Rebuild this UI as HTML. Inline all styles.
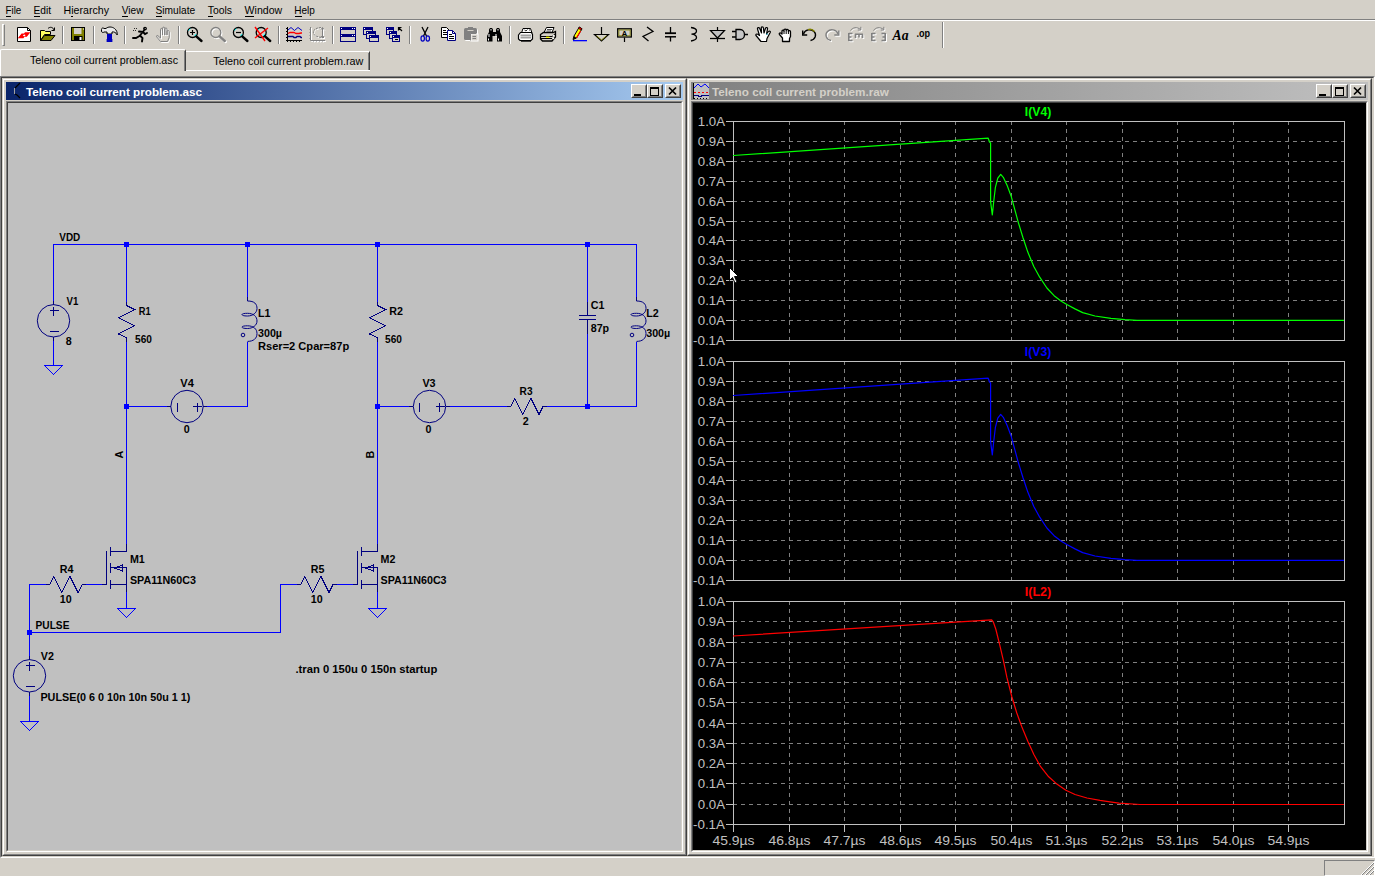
<!DOCTYPE html>
<html lang="en"><head><meta charset="utf-8"><title>LTspice IV - Teleno coil current problem</title>
<style>
html,body{margin:0;padding:0}
body{width:1375px;height:876px;background:#D4D0C8;position:relative;overflow:hidden;font-family:"Liberation Sans",sans-serif;font-size:11px;color:#000}
.abs{position:absolute}
svg{position:absolute;left:0;top:0;overflow:visible}
svg text{font-family:"Liberation Sans",sans-serif;white-space:pre}
.hl{position:absolute;height:1px}
.vl{position:absolute;width:1px}
.win{position:absolute;box-sizing:border-box;background:#D4D0C8;border:1px solid;border-color:#D4D0C8 #404040 #404040 #D4D0C8}
.win>.in{position:absolute;left:0;top:0;right:0;bottom:0;border:1px solid;border-color:#fff #808080 #808080 #fff}
.title{position:absolute;left:3px;top:3px;right:3px;height:18px}
.client{position:absolute;left:3px;top:22px;right:3px;bottom:3px;box-sizing:border-box;border:1px solid;border-color:#808080 #fff #fff #808080}
.client>.c2{position:absolute;left:0;top:0;right:0;bottom:0;border:1px solid;border-color:#404040 #D4D0C8 #D4D0C8 #404040}
.btn{position:absolute;top:2px;width:16px;height:14px;box-sizing:border-box;background:#D4D0C8;border:1px solid;border-color:#fff #404040 #404040 #fff}
.btn>i{position:absolute;left:0;top:0;right:0;bottom:0;border:1px solid;border-color:#D4D0C8 #808080 #808080 #D4D0C8}
</style></head>
<body>

<div class="hl" style="left:0;top:19px;width:1375px;background:#808080"></div>
<div class="hl" style="left:0;top:20px;width:1375px;background:#fff"></div>
<div class="abs" style="left:2px;top:24px;width:3px;height:22px;box-sizing:border-box;border:1px solid;border-color:#fff #808080 #808080 #fff"></div>
<div class="abs" style="left:0;top:49px;width:186px;height:22px;box-sizing:border-box;border-top:1px solid #fff;border-left:1px solid #fff;border-right:1px solid #404040;border-radius:2px 2px 0 0"><div class="abs" style="right:0;top:1px;bottom:0;width:1px;background:#808080"></div></div>
<div class="abs" style="left:186px;top:51px;width:184px;height:19px;box-sizing:border-box;border-top:1px solid #fff;border-right:1px solid #404040"><div class="abs" style="right:0;top:1px;bottom:0;width:1px;background:#808080"></div></div>
<div class="hl" style="left:186px;top:70px;width:184px;background:#fff"></div>
<div class="vl" style="left:0;top:50px;height:26px;background:#fff"></div>
<div class="abs" style="left:0;top:76px;width:1375px;height:782px;box-sizing:border-box;border:1px solid;border-color:#808080 #fff #fff #808080"><div class="abs" style="left:0;top:0;right:0;bottom:0;border:1px solid;border-color:#404040 #D4D0C8 #D4D0C8 #404040"></div></div>
<div class="win" style="left:2px;top:78px;width:685px;height:778px"><div class="in"></div><div class="title" style="background:linear-gradient(to right,#0A246A,#A6CAF0)"><div class="btn" style="left:625px"><i></i></div><div class="btn" style="left:641px"><i></i></div><div class="btn" style="left:659px"><i></i></div></div>
<div class="client" style="background:#C0C0C0"><div class="c2"></div></div></div>
<div class="win" style="left:687px;top:78px;width:685px;height:778px"><div class="in"></div><div class="title" style="background:linear-gradient(to right,#808080,#C0C0C0)"><div class="btn" style="left:625px"><i></i></div><div class="btn" style="left:641px"><i></i></div><div class="btn" style="left:659px"><i></i></div></div>
<div class="client" style="background:#000"><div class="c2"></div></div></div>
<div class="abs" style="left:1324px;top:860px;width:51px;height:16px;box-sizing:border-box;border:1px solid;border-color:#808080 #fff #fff #808080"></div>
<svg width="1375" height="876" viewBox="0 0 1375 876">
<g font-size="11.5">
<text x="5.5" y="14.3" textLength="15.8" lengthAdjust="spacingAndGlyphs">File</text>
<text x="33.4" y="14.3" textLength="17.6" lengthAdjust="spacingAndGlyphs">Edit</text>
<text x="63.5" y="14.3" textLength="45.5" lengthAdjust="spacingAndGlyphs">Hierarchy</text>
<text x="121.7" y="14.3" textLength="21.8" lengthAdjust="spacingAndGlyphs">View</text>
<text x="155.5" y="14.3" textLength="39.7" lengthAdjust="spacingAndGlyphs">Simulate</text>
<text x="207.7" y="14.3" textLength="24.3" lengthAdjust="spacingAndGlyphs">Tools</text>
<text x="244.6" y="14.3" textLength="37.6" lengthAdjust="spacingAndGlyphs">Window</text>
<text x="294.3" y="14.3" textLength="20.6" lengthAdjust="spacingAndGlyphs">Help</text>
</g>
<rect x="6" y="16" width="5" height="1" fill="#000"/>
<rect x="34" y="16" width="6" height="1" fill="#000"/>
<rect x="71" y="16" width="2" height="1" fill="#000"/>
<rect x="122" y="16" width="6" height="1" fill="#000"/>
<rect x="156" y="16" width="6" height="1" fill="#000"/>
<rect x="208" y="16" width="5" height="1" fill="#000"/>
<rect x="245" y="16" width="9" height="1" fill="#000"/>
<rect x="295" y="16" width="7" height="1" fill="#000"/>
<text x="30" y="64" font-size="11.5" textLength="148" lengthAdjust="spacingAndGlyphs">Teleno coil current problem.asc</text>
<text x="213.3" y="65" font-size="11.5" textLength="150" lengthAdjust="spacingAndGlyphs">Teleno coil current problem.raw</text>
<text x="26" y="96" font-size="11.5" font-weight="bold" fill="#fff" textLength="176" lengthAdjust="spacingAndGlyphs">Teleno coil current problem.asc</text>
<text x="712" y="96" font-size="11.5" font-weight="bold" fill="#D4D0C8" textLength="177" lengthAdjust="spacingAndGlyphs">Teleno coil current problem.raw</text>
<g fill="none" stroke="#000" stroke-width="1.2"><path d="M20,83 L15,88 M15,94 L17,95 L20,98"/></g><rect x="14" y="88" width="1" height="6" fill="#A0A0A0"/>
<g shape-rendering="crispEdges"><rect x="694" y="83" width="15" height="16" fill="#C0C0C0"/><rect x="693" y="83" width="1" height="16" fill="#000"/><path d="M694,88 L698,84 L701,87 L705,84 L709,88" fill="none" stroke="#0000FF" stroke-width="1" shape-rendering="auto"/><path d="M694,92.5 H709" stroke="#FF0000" stroke-width="1" stroke-dasharray="2 2" fill="none"/><path d="M694,95.5 H698 V96.5 H701 V95.5 H709" stroke="#000080" stroke-width="1" fill="none"/><path d="M694,98.5 H709" stroke="#000" stroke-width="1" stroke-dasharray="1 2" fill="none"/></g>
<rect x="634" y="94" width="7" height="2" fill="#000"/>
<rect x="650.5" y="87.5" width="8" height="8" fill="none" stroke="#000" stroke-width="1"/><rect x="650" y="87" width="9" height="2" fill="#000"/>
<path d="M669,87.5 L676,94.5 M676,87.5 L669,94.5" stroke="#000" stroke-width="1.7" fill="none"/>
<rect x="1319" y="94" width="7" height="2" fill="#000"/>
<rect x="1335.5" y="87.5" width="8" height="8" fill="none" stroke="#000" stroke-width="1"/><rect x="1335" y="87" width="9" height="2" fill="#000"/>
<path d="M1354,87.5 L1361,94.5 M1361,87.5 L1354,94.5" stroke="#000" stroke-width="1.7" fill="none"/>
<g stroke-width="1" fill="none"><path d="M1362,875 L1374,863 M1366,875 L1374,867 M1370,875 L1374,871" stroke="#808080"/><path d="M1361,875 L1374,862 M1365,875 L1374,866 M1369,875 L1374,870" stroke="#fff"/></g>
</svg>
<svg width="1375" height="876" viewBox="0 0 1375 876">
<g shape-rendering="crispEdges">
<rect x="62" y="26" width="1" height="18" fill="#808080"/><rect x="63" y="26" width="1" height="18" fill="#fff"/>
<rect x="93" y="26" width="1" height="18" fill="#808080"/><rect x="94" y="26" width="1" height="18" fill="#fff"/>
<rect x="124" y="26" width="1" height="18" fill="#808080"/><rect x="125" y="26" width="1" height="18" fill="#fff"/>
<rect x="178" y="26" width="1" height="18" fill="#808080"/><rect x="179" y="26" width="1" height="18" fill="#fff"/>
<rect x="278" y="26" width="1" height="18" fill="#808080"/><rect x="279" y="26" width="1" height="18" fill="#fff"/>
<rect x="332" y="26" width="1" height="18" fill="#808080"/><rect x="333" y="26" width="1" height="18" fill="#fff"/>
<rect x="409" y="26" width="1" height="18" fill="#808080"/><rect x="410" y="26" width="1" height="18" fill="#fff"/>
<rect x="509" y="26" width="1" height="18" fill="#808080"/><rect x="510" y="26" width="1" height="18" fill="#fff"/>
<rect x="563" y="26" width="1" height="18" fill="#808080"/><rect x="564" y="26" width="1" height="18" fill="#fff"/>
<rect x="942" y="22" width="1" height="26" fill="#808080"/><rect x="943" y="22" width="1" height="26" fill="#fff"/>
</g>
<g transform="translate(17,26)"><path d="M0.5,1.5 H10.5 L13.5,4.5 V15.5 H0.5 Z" fill="#fff" stroke="#000"/><path d="M10.5,1.5 V4.5 H13.5" fill="none" stroke="#000"/><path d="M0.8,12.2 L4.6,7.5 H7 L8,6.2 H13.4 L9.8,10.8 H7.5 L6.4,12.2 Z" fill="#FF0000"/><path d="M5.8,9.6 L7.2,8.4 L8.6,9 L7.3,10.4 Z" fill="#fff"/></g>
<g transform="translate(40,26)"><path d="M0.5,14.5 V4.5 H4.5 L5.5,5.5 H10.5 V8.5 H4.5 Z" fill="#FFFF60" stroke="#000"/><path d="M0.5,14.5 L4.5,9.5 H15 L11,14.5 Z" fill="#808000" stroke="#000"/><path d="M8,2.5 C10,0.5 13,1 14,4 M14.5,1.5 V4.5 H11.5" fill="none" stroke="#000"/></g>
<g transform="translate(71,26)"><rect x="0.5" y="1.5" width="13" height="13" fill="#808000" stroke="#000"/><rect x="3" y="2" width="7.5" height="6" fill="#D4D0C8"/><rect x="3" y="10" width="8.5" height="4.5" fill="#000"/><rect x="8.5" y="11" width="2" height="3" fill="#fff"/><rect x="12" y="2.5" width="1" height="1" fill="#fff"/></g>
<g transform="translate(102,26)"><path d="M-0.5,3.5 C-0.5,2 1,1.5 2,2.5 L4,2.5 C6,0.5 10,0.5 12.5,2.5 C14.5,4 15.5,6.5 15.2,9 C14,6.5 12,5.5 10,6 V8 H5 V6 L2,6 C1,7 -0.5,6.5 -0.5,5 Z" fill="#E8E8E8" stroke="#000"/><rect x="5" y="8" width="5" height="8" fill="#0000C0"/><rect x="4.6" y="13" width="5.8" height="3" fill="#0000C0"/></g>
<g transform="translate(133,26)"><g fill="none" stroke="#000" stroke-width="1.9" stroke-linecap="round"><path d="M11,4.5 L6.5,10 M6.5,10 L3,12 H0 M7,9.5 L9.5,12 L9,15.5 M10,6 L6,5.5 M10,6 L12,8 L14,7"/></g><circle cx="12" cy="2.6" r="1.9" fill="#000"/><rect x="11.8" y="2.2" width="0.8" height="0.8" fill="#fff"/><path d="M1,2.5 H4 M0,4.5 H3" stroke="#000" stroke-width="0.8" stroke-dasharray="1 1"/></g>
<g transform="translate(156,26)"><g fill="none"><path d="M4.5,15.5 L0.8,11 C0,10 1,9 2,9.8 L4.5,12 V3.5 C4.5,2 6.5,2 6.5,3.5 V9 V2.2 C6.5,0.8 8.8,0.8 8.8,2.2 V9 V3 C8.8,1.6 11,1.6 11,3 V9 V5.5 C11,4.2 13.2,4.2 13.2,5.5 V11.5 L11.5,15.5 Z" stroke="#fff" transform="translate(1,1)"/><path d="M4.5,15.5 L0.8,11 C0,10 1,9 2,9.8 L4.5,12 V3.5 C4.5,2 6.5,2 6.5,3.5 V9 V2.2 C6.5,0.8 8.8,0.8 8.8,2.2 V9 V3 C8.8,1.6 11,1.6 11,3 V9 V5.5 C11,4.2 13.2,4.2 13.2,5.5 V11.5 L11.5,15.5 Z" stroke="#808080"/></g></g>
<g transform="translate(187,26)"><circle cx="5.5" cy="6.5" r="5" fill="none" stroke="#000" stroke-width="1.3"/><path d="M9.3,10.3 L14.5,15" stroke="#000" stroke-width="2.4" stroke-linecap="round"/><path d="M3,6.5 H8 M5.5,4 V9" stroke="#000" stroke-width="1.2"/><path d="M1.6,4.5 L3.2,2.6 M7.5,10 L9.2,8" stroke="#00FFFF" stroke-width="1"/></g>
<g transform="translate(210,26)"><g transform="translate(1,1)"><circle cx="5.8" cy="6.5" r="5" fill="none" stroke="#fff" stroke-width="1.3"/><path d="M9.6,10.3 L14.8,15" stroke="#fff" stroke-width="2.4" stroke-linecap="round"/></g><circle cx="5.8" cy="6.5" r="5" fill="none" stroke="#808080" stroke-width="1.3"/><path d="M9.6,10.3 L14.8,15" stroke="#808080" stroke-width="2.4" stroke-linecap="round"/></g>
<g transform="translate(233,26)"><circle cx="5.4" cy="6.5" r="5" fill="none" stroke="#000" stroke-width="1.3"/><path d="M9.2,10.3 L14.4,15" stroke="#000" stroke-width="2.4" stroke-linecap="round"/><path d="M3,6.5 H8" stroke="#000" stroke-width="1.2"/><path d="M1.6,4.5 L3.2,2.6 M7.5,10 L9.2,8" stroke="#00FFFF" stroke-width="1"/></g>
<g transform="translate(256,26)"><circle cx="5.2" cy="6.5" r="5" fill="none" stroke="#000" stroke-width="1.3"/><path d="M9.0,10.3 L14.2,15" stroke="#000" stroke-width="2.4" stroke-linecap="round"/><path d="M1.6,4.5 L3.2,2.6 M7,10 L9,8" stroke="#00FFFF" stroke-width="1"/><path d="M-1,1 L9,15 M12,2 L-1,12" stroke="#FF0000" stroke-width="1.4"/></g>
<g transform="translate(287,26)"><g shape-rendering="crispEdges"><rect x="0" y="1" width="1" height="15" fill="#000"/><rect x="-1" y="14" width="16" height="1" fill="#000"/><path d="M-1,2.5 H0 M-1,5.5 H0 M-1,8.5 H0 M-1,11.5 H0 M3.5,15 V16 M6.5,15 V16 M9.5,15 V16 M12.5,15 V16" stroke="#000"/></g><path d="M1,4 L4,1.5 L7.5,4.5 L11,1.5 L15,4.5" fill="none" stroke="#0000C0" stroke-width="1"/><path d="M1,7.5 L3,6.5 H7 L9,7.5 H12 L14,7 H15" fill="none" stroke="#FF0000" stroke-width="1.3"/><path d="M1,10.5 H6 L7,11.5 H9 L10,10.5 H13 L14,11.5 H15" fill="none" stroke="#000080" stroke-width="1.3"/></g>
<g transform="translate(310,26)"><g transform="translate(1,1)"><path d="M0.5,1 V14.5 H15" fill="none" stroke="#fff"/><path d="M-0.5,3.5 H0.5 M-0.5,6.5 H0.5 M-0.5,9.5 H0.5 M-0.5,12.5 H0.5 M3.5,14.5 V15.5 M6.5,14.5 V15.5 M9.5,14.5 V15.5 M12.5,14.5 V15.5" stroke="#fff"/><path d="M11,1.5 C4,2 3,5 3.5,7 C4,10 8,11.5 14,11.5" fill="none" stroke="#fff" stroke-dasharray="2 1"/><path d="M12.5,2 V12 M11,3.5 L12.5,1.5 L14,3.5 M11,10 L12.5,12 L14,10" fill="none" stroke="#fff"/></g><path d="M0.5,1 V14.5 H15" fill="none" stroke="#808080"/><path d="M-0.5,3.5 H0.5 M-0.5,6.5 H0.5 M-0.5,9.5 H0.5 M-0.5,12.5 H0.5 M3.5,14.5 V15.5 M6.5,14.5 V15.5 M9.5,14.5 V15.5 M12.5,14.5 V15.5" stroke="#808080"/><path d="M11,1.5 C4,2 3,5 3.5,7 C4,10 8,11.5 14,11.5" fill="none" stroke="#808080" stroke-dasharray="2 1"/><path d="M12.5,2 V12 M11,3.5 L12.5,1.5 L14,3.5 M11,10 L12.5,12 L14,10" fill="none" stroke="#808080"/></g>
<g transform="translate(341,26)"><g shape-rendering="crispEdges"><rect x="-0.5" y="1.5" width="15" height="6.5" fill="#D4D0C8" stroke="#000080" stroke-width="1"/><rect x="-1.0" y="1.0" width="16" height="2.5" fill="#000080"/><rect x="0.19999999999999996" y="1.8" width="1" height="1" fill="#fff"/><rect x="-0.5" y="8.5" width="15" height="6.5" fill="#D4D0C8" stroke="#000080" stroke-width="1"/><rect x="-1.0" y="8.0" width="16" height="2.5" fill="#000080"/><rect x="0.19999999999999996" y="8.8" width="1" height="1" fill="#fff"/><rect x="11" y="2" width="1" height="1" fill="#fff"/><rect x="13" y="2" width="1" height="1" fill="#fff"/><rect x="11" y="9" width="1" height="1" fill="#fff"/><rect x="13" y="9" width="1" height="1" fill="#fff"/></g></g>
<g transform="translate(364,26)"><g shape-rendering="crispEdges"><rect x="-0.5" y="1.5" width="9" height="7" fill="#D4D0C8" stroke="#000080" stroke-width="1"/><rect x="-1.0" y="1.0" width="10" height="2.5" fill="#000080"/><rect x="0.19999999999999996" y="1.8" width="1" height="1" fill="#fff"/><rect x="2.5" y="5.5" width="9" height="7" fill="#D4D0C8" stroke="#000080" stroke-width="1"/><rect x="2.0" y="5.0" width="10" height="2.5" fill="#000080"/><rect x="3.2" y="5.8" width="1" height="1" fill="#fff"/><rect x="5.5" y="9.5" width="9" height="6" fill="#D4D0C8" stroke="#000080" stroke-width="1"/><rect x="5.0" y="9.0" width="10" height="2.5" fill="#000080"/><rect x="6.2" y="9.8" width="1" height="1" fill="#fff"/></g></g>
<g transform="translate(387,26)"><g shape-rendering="crispEdges"><rect x="-0.5" y="1.5" width="7" height="6.5" fill="#D4D0C8" stroke="#000080" stroke-width="1"/><rect x="-1.0" y="1.0" width="8" height="2.5" fill="#000080"/><rect x="0.19999999999999996" y="1.8" width="1" height="1" fill="#fff"/><rect x="2.5" y="5.5" width="7" height="6.5" fill="#D4D0C8" stroke="#000080" stroke-width="1"/><rect x="2.0" y="5.0" width="8" height="2.5" fill="#000080"/><rect x="3.2" y="5.8" width="1" height="1" fill="#fff"/><rect x="5.5" y="9.5" width="7" height="6" fill="#D4D0C8" stroke="#000080" stroke-width="1"/><rect x="5.0" y="9.0" width="8" height="2.5" fill="#000080"/><rect x="6.2" y="9.8" width="1" height="1" fill="#fff"/><rect x="8" y="12.5" width="3" height="1.5" fill="#000"/></g><path d="M15,5 L11.5,1.5 M11.5,4.5 V1.5 H14.5" fill="none" stroke="#000" stroke-width="1.2"/></g>
<g transform="translate(418,26)"><path d="M4,1 L8.5,10 M10,1 L5.5,10" stroke="#000" stroke-width="1.3" fill="none"/><ellipse cx="4.7" cy="12.5" rx="1.7" ry="2.6" fill="none" stroke="#0000C0" stroke-width="1.2"/><ellipse cx="9.8" cy="12.5" rx="1.7" ry="2.6" fill="none" stroke="#0000C0" stroke-width="1.2"/></g>
<g transform="translate(441,26)"><path d="M0.5,1.5 H5.5 L8.5,4.5 V11.5 H0.5 Z" fill="#fff" stroke="#000"/><path d="M2,4.5 H5 M2,6.5 H6 M2,8.5 H6" stroke="#000"/><path d="M6.5,4.5 H11.5 L14.5,7.5 V14.5 H6.5 Z" fill="#fff" stroke="#000080"/><path d="M11.5,4.5 V7.5 H14.5" fill="none" stroke="#000080"/><path d="M8,8.5 H11 M8,10.5 H13 M8,12.5 H13" stroke="#000"/></g>
<g transform="translate(464,26)"><rect x="1" y="3" width="13" height="12" rx="1.5" fill="#fff"/><rect x="0" y="2" width="13" height="12" rx="1.5" fill="#808080"/><rect x="4" y="1" width="5" height="2" fill="#808080"/><rect x="3.5" y="4" width="6" height="1" fill="#D4D0C8"/><rect x="7" y="8" width="7" height="7" fill="#D4D0C8" stroke="#fff"/><path d="M6.5,14.5 V7.5 H12" fill="none" stroke="#808080"/><path d="M8.5,10.5 H12 M8.5,12.5 H12" stroke="#808080"/></g>
<g transform="translate(487,26)"><path d="M0,15.5 V10 L2,6 V3.5 L3,2 H5 L6,3.5 V6 H9 V3.5 L10,2 H12 L13,3.5 V6 L15,10 V15.5 H10 V10 H5.5 V15.5 Z" fill="#000"/><rect x="3.5" y="3" width="1" height="1.5" fill="#fff"/><rect x="10.5" y="3" width="1" height="1.5" fill="#fff"/><rect x="1.5" y="8" width="1" height="3" fill="#fff"/><rect x="8.5" y="8" width="1" height="3" fill="#fff"/><rect x="1" y="12.5" width="1" height="2" fill="#fff"/><rect x="11" y="12.5" width="1" height="2" fill="#fff"/></g>
<g transform="translate(518,26)"><path d="M3.5,7 L5,2.5 H12.5 L14,7" fill="#fff" stroke="#000"/><path d="M6.5,4 L8,5 L9.5,3.5 M11,4 H12" fill="none" stroke="#000" stroke-width="0.8"/><path d="M0.5,9 L2.5,6.5 H13.5 L14.5,8.5 V13 L13,14.5 H2 L0.5,13 Z" fill="#fff" stroke="#000" stroke-width="1.2"/><rect x="2.5" y="8" width="10.5" height="5" fill="#A0A0A0"/><path d="M2.5,8.5 H13 M2.5,10.5 H13 M2.5,12.5 H13" stroke="#fff" stroke-dasharray="1 1"/><rect x="3" y="14.5" width="10" height="1.2" fill="#000"/></g>
<g transform="translate(541,26)"><path d="M3,6.5 L5.5,1.5 H13 L11,6.5 Z" fill="#fff" stroke="#000"/><path d="M6,3.5 H11 M5.5,5 H10" stroke="#000" stroke-width="0.7"/><path d="M-0.5,8.5 L2.5,6.5 H12 L14.5,5.5 V11 L11,15 H1.5 L-0.5,13 Z" fill="#D4D0C8" stroke="#000" stroke-width="1.3"/><path d="M-0.5,10.5 H11 L14.5,7.5 M0,12.5 H11" fill="none" stroke="#000"/><rect x="5" y="10.6" width="3.5" height="1.4" fill="#FFFF00"/><circle cx="12.5" cy="9.5" r="0.8" fill="#fff"/><circle cx="12.5" cy="12.5" r="0.8" fill="#fff"/></g>
<g transform="translate(572,26)"><path d="M1,13.5 L2,10 L7.3,1 L10,2.8 L4.5,12 Z" fill="#FFFF00" stroke="#000" stroke-width="1"/><path d="M7.3,1 L10,2.8 L9.2,4.2 L6.5,2.4 Z" fill="#FF0000" stroke="#000" stroke-width="0.6"/><path d="M8.6,5 L4.5,12" stroke="#FF0000" stroke-width="1.2"/><path d="M1,13.5 L2,10 L4.5,12 Z" fill="#000"/><rect x="1" y="14" width="14" height="1.3" fill="#0000FF"/></g>
<g transform="translate(595,26)"><path d="M6.5,1 V8.5" stroke="#000" stroke-width="1.2"/><path d="M-0.5,8.5 H13.5 L6.5,15 Z" fill="#D4D0C8" stroke="#000" stroke-width="1.2"/><path d="M1.5,9.8 L6.5,14 L11.5,9.8" fill="none" stroke="#808000" stroke-width="0.9"/></g>
<g transform="translate(618,26)"><rect x="-0.3" y="2.8" width="13.6" height="8.2" fill="#D4D0C8" stroke="#000" stroke-width="1.3"/><rect x="0.9" y="4" width="11.2" height="5.8" fill="none" stroke="#808000" stroke-width="0.8"/><path d="M6.5,11.5 V16" stroke="#000" stroke-width="1.2"/><text x="6.5" y="9.6" font-size="7.5" font-weight="bold" text-anchor="middle" font-family="Liberation Mono,monospace">A</text></g>
<g transform="translate(641,26)"><path d="M6,1 L12,5.5 L2,10.5 L7.5,15" fill="none" stroke="#000" stroke-width="1.3" stroke-linejoin="miter"/></g>
<g transform="translate(664,26)"><path d="M6.5,1 V7 M6.5,11 V15.5" stroke="#000" stroke-width="1.3"/><path d="M1,7.2 H12" stroke="#000" stroke-width="1.8"/><path d="M1,10.8 H12" stroke="#000" stroke-width="1.5"/></g>
<g transform="translate(687,26)"><path d="M4,1.5 C8,2 9.5,3.5 9.5,5 C9.5,7 7,8 4.5,8.2 C7,8.5 9.5,9.5 9.5,11.5 C9.5,13.5 7,14.5 4,15" fill="none" stroke="#000" stroke-width="1.3"/></g>
<g transform="translate(710,26)"><path d="M7.5,1 V16" stroke="#000" stroke-width="1.2"/><path d="M0.5,4.5 H14.5 L7.5,12 Z" fill="#C0C0C0" stroke="#000" stroke-width="1.2"/><path d="M0,12.5 H15" stroke="#000" stroke-width="1.3"/></g>
<g transform="translate(733,26)"><path d="M3,3.5 H7 C13,3.5 13,13.5 7,13.5 H3 Z" fill="#C8C8C8" stroke="#000" stroke-width="1.3"/><path d="M-1,5.5 H3 M-1,11 H3 M11.5,8.5 H15" stroke="#000" stroke-width="1.3"/></g>
<g transform="translate(756,26)"><path d="M5,15.5 L0,9.5 C-0.5,8.5 0.5,7.5 1.8,8.3 L3.5,9.5 L1.5,3 C1.2,1.5 3,1 3.6,2.3 L5.5,7 L5.3,1.8 C5.3,0.5 7.3,0.5 7.4,1.8 L8,7 L9.5,2.2 C10,1 11.8,1.5 11.5,2.8 L10.5,8 L12.5,5.5 C13.3,4.5 14.8,5.3 14.2,6.5 L11,12.5 L10.5,15.5 Z" fill="#fff" stroke="#000" stroke-width="1.2" stroke-linejoin="round"/><rect x="10.5" y="7.5" width="1" height="1.5" fill="#00A0C0"/></g>
<g transform="translate(779,26)"><path d="M3.5,15.5 V12 L0.5,8.5 C-0.3,7.5 0.8,6.3 2,7.2 L3,8 V5 C3,3.8 4.8,3.8 5,5 V4 C5,2.8 7,2.8 7.2,4 V4.3 C7.4,3.1 9.3,3.1 9.4,4.4 V5.2 C9.8,4.2 11.5,4.4 11.5,5.7 V10.5 L10.5,12.5 V15.5 Z" fill="#fff" stroke="#000" stroke-width="1.3" stroke-linejoin="round"/><path d="M5,5 V8 M7.2,4.5 V8 M9.4,5 V8" stroke="#000" stroke-width="1"/></g>
<g transform="translate(802,26)"><path d="M1.5,8 C3,3.5 9,2.5 12,5.5 C15,8.5 13.5,13.5 8.5,14.5" fill="none" stroke="#000" stroke-width="1.3"/><path d="M0.7,4.5 V9 H5.2" fill="none" stroke="#000" stroke-width="1.4"/><path d="M6,3.6 C8.5,2.8 11,3.6 12.6,5.6" fill="none" stroke="#808000" stroke-width="1.3"/></g>
<g transform="translate(825,26)"><g transform="translate(1,1)"><path d="M13,8 C11.5,3.5 5.5,2.5 2.5,5.5 C-0.5,8.5 1,13.5 6,14.5" fill="none" stroke="#fff" stroke-width="1.3"/><path d="M13.8,4.5 V9 H9.3" fill="none" stroke="#fff" stroke-width="1.4"/></g><path d="M13,8 C11.5,3.5 5.5,2.5 2.5,5.5 C-0.5,8.5 1,13.5 6,14.5" fill="none" stroke="#808080" stroke-width="1.3"/><path d="M13.8,4.5 V9 H9.3" fill="none" stroke="#808080" stroke-width="1.4"/></g>
<g transform="translate(848,26)"><g transform="translate(1,1)"><path d="M0.8,7 V15 M0.8,7.5 H4.5 M0.8,11 H3.5 M0.8,14.5 H4.5" fill="none" stroke="#fff" stroke-width="1.6"/><path d="M7,8.3 H15 M7.5,8.3 V12 M11,8.3 V11.5 M14.5,8.3 V12" fill="none" stroke="#fff" stroke-width="1.6"/><path d="M2.5,4.5 C4.5,1.5 9,0.5 12.5,3.5 M12.8,0.8 V4 H9.8" fill="none" stroke="#fff" stroke-width="1"/></g><path d="M0.8,7 V15 M0.8,7.5 H4.5 M0.8,11 H3.5 M0.8,14.5 H4.5" fill="none" stroke="#808080" stroke-width="1.6"/><path d="M7,8.3 H15 M7.5,8.3 V12 M11,8.3 V11.5 M14.5,8.3 V12" fill="none" stroke="#808080" stroke-width="1.6"/><path d="M2.5,4.5 C4.5,1.5 9,0.5 12.5,3.5 M12.8,0.8 V4 H9.8" fill="none" stroke="#808080" stroke-width="1"/></g>
<g transform="translate(871,26)"><g transform="translate(1,1)"><path d="M0.8,7 V15 M0.8,7.5 H4.5 M0.8,11 H3.5 M0.8,14.5 H4.5" fill="none" stroke="#fff" stroke-width="1.6"/><path d="M14.2,7 V15 M14.2,7.5 H10.5 M14.2,11 H11.5 M14.2,14.5 H10.5" fill="none" stroke="#fff" stroke-width="1.6"/><path d="M2.5,4.5 C4.5,1.5 9,0.5 12.5,3.5 M12.8,0.8 V4 H9.8" fill="none" stroke="#fff" stroke-width="1"/></g><path d="M0.8,7 V15 M0.8,7.5 H4.5 M0.8,11 H3.5 M0.8,14.5 H4.5" fill="none" stroke="#808080" stroke-width="1.6"/><path d="M14.2,7 V15 M14.2,7.5 H10.5 M14.2,11 H11.5 M14.2,14.5 H10.5" fill="none" stroke="#808080" stroke-width="1.6"/><path d="M2.5,4.5 C4.5,1.5 9,0.5 12.5,3.5 M12.8,0.8 V4 H9.8" fill="none" stroke="#808080" stroke-width="1"/></g>
<g transform="translate(894,26)"><text x="-1.5" y="13.8" font-size="14" font-weight="bold" font-style="italic" textLength="16" lengthAdjust="spacingAndGlyphs" style="font-family:'Liberation Serif',serif">Aa</text></g>
<g transform="translate(917,26)"><text x="-0.5" y="11.2" font-size="11" font-weight="bold" textLength="13.6" lengthAdjust="spacingAndGlyphs">.op</text></g>
</svg>
<svg width="1375" height="876" viewBox="0 0 1375 876">
<g fill="none" stroke="#0000FF" stroke-width="1" shape-rendering="crispEdges"><path d="M53.5,300.5 L53.5,244.5 L636.5,244.5 L636.5,297.0 M53.5,341.0 L53.5,365.5 M44.5,365.5 H62.5 L53.5,374.5 Z M126.5,244.5 L126.5,301.5 M126.5,342.0 L126.5,544.0 M126.5,406.5 L167.0,406.5 M207.0,406.5 L247.5,406.5 L247.5,341.5 M247.5,244.5 L247.5,297.0 M377.5,244.5 L377.5,301.5 M377.5,342.0 L377.5,544.0 M377.5,406.5 L409.5,406.5 M450.0,406.5 L506.6,406.5 M547.0,406.5 L636.5,406.5 L636.5,341.5 M587.5,244.5 L587.5,301.5 M587.5,333.5 L587.5,406.5 M126.5,592.0 L126.5,608.5 M117.5,608.5 H135.5 L126.5,617.5 Z M377.5,592.0 L377.5,608.5 M368.5,608.5 H386.5 L377.5,617.5 Z M45.7,584.5 L29.5,584.5 L29.5,655.5 M86.1,584.5 L102.2,584.5 M29.5,632.5 L280.5,632.5 L280.5,584.5 L296.6,584.5 M337.0,584.5 L353.2,584.5 M29.5,696.0 L29.5,721.5 M20.5,721.5 H38.5 L29.5,730.5 Z"/></g>
<g fill="none" stroke="#000080" stroke-width="1" shape-rendering="crispEdges"><path d="M53.5,300.6 V304.6 M53.5,337.0 V341.0 M49.5,310.8 H58.5 M53.5,306.8 V315.8 M49.5,331.3 H58.5 M29.5,655.5999999999999 V659.5999999999999 M29.5,692.0 V696.0 M25.5,665.8 H34.5 M29.5,661.8 V670.8 M25.5,686.3 H34.5 M166.8,406.5 H170.8 M203.2,406.5 H207.2 M197,402.5 V411.5 M193,406.5 H202 M177,402.5 V411.5 M409.3,406.5 H413.3 M445.7,406.5 H449.7 M439.5,402.5 V411.5 M435.5,406.5 H444.5 M419.5,402.5 V411.5 M126.5,301.5 L126.5,305.5 L134.6,309.6 L118.4,317.7 L134.6,325.8 L118.4,333.9 L126.5,337.9 L126.5,341.9 M377.5,301.5 L377.5,305.5 L385.6,309.6 L369.4,317.7 L385.6,325.8 L369.4,333.9 L377.5,337.9 L377.5,341.9 M506.6,406.5 L510.6,406.5 L514.7,398.4 L522.8,414.6 L530.9,398.4 L539.0,414.6 L543.0,406.5 L547.0,406.5 M45.7,584.5 L49.7,584.5 L53.8,576.4 L61.9,592.6 L70.0,576.4 L78.1,592.6 L82.1,584.5 L86.1,584.5 M296.6,584.5 L300.6,584.5 L304.7,576.4 L312.8,592.6 L320.9,576.4 L329.0,592.6 L333.0,584.5 L337.0,584.5 M587.5,301.5 V315.5 M579.0,315.5 H596.0 M579.0,319.5 H596.0 M587.5,319.5 V333.5 M126.5,544 V552 M110.0,551.5 H127.0 M110.5,547 V556 M110.5,563 V573 M110.5,580 V589 M106.5,551 V585 M101.7,584.5 H107.0 M110.0,584.5 H127.0 M126.5,567 V592 M110.0,567.5 H127.0 M122.5,565 V571 L114.5,568 Z M377.5,544 V552 M361.0,551.5 H378.0 M361.5,547 V556 M361.5,563 V573 M361.5,580 V589 M357.5,551 V585 M352.7,584.5 H358.0 M361.0,584.5 H378.0 M377.5,567 V592 M361.0,567.5 H378.0 M373.5,565 V571 L365.5,568 Z"/></g>
<g fill="none" stroke="#000080" stroke-width="1"><circle cx="53.5" cy="320.8" r="16.2"/><circle cx="29.5" cy="675.8" r="16.2"/><circle cx="187" cy="406.5" r="16.2"/><circle cx="429.5" cy="406.5" r="16.2"/><circle cx="243.0" cy="335" r="1.8"/><circle cx="632.0" cy="335" r="1.8"/><path d="M247.5,297 V301 C254.5,301 257.0,304 257.0,308.5 C257.0,313 252.5,316 247.5,316 C243.5,316 242.0,315.3 242.0,314.5 C242.0,313.7 244.5,313.3 247.5,313.3 C253.5,313.3 257.0,316.5 257.0,321 C257.0,325.5 252.5,328.5 247.5,328.5 C243.5,328.5 242.0,327.8 242.0,327 C242.0,326.2 244.5,325.8 247.5,325.8 C253.5,325.8 257.0,329 257.0,333.5 C257.0,338.5 253.5,341.4 247.5,341.4 M636.5,297 V301 C643.5,301 646.0,304 646.0,308.5 C646.0,313 641.5,316 636.5,316 C632.5,316 631.0,315.3 631.0,314.5 C631.0,313.7 633.5,313.3 636.5,313.3 C642.5,313.3 646.0,316.5 646.0,321 C646.0,325.5 641.5,328.5 636.5,328.5 C632.5,328.5 631.0,327.8 631.0,327 C631.0,326.2 633.5,325.8 636.5,325.8 C642.5,325.8 646.0,329 646.0,333.5 C646.0,338.5 642.5,341.4 636.5,341.4"/></g>
<g fill="#0000FF" shape-rendering="crispEdges">
<rect x="124" y="242" width="5" height="5"/>
<rect x="245" y="242" width="5" height="5"/>
<rect x="375" y="242" width="5" height="5"/>
<rect x="585" y="242" width="5" height="5"/>
<rect x="124" y="404" width="5" height="5"/>
<rect x="375" y="404" width="5" height="5"/>
<rect x="585" y="404" width="5" height="5"/>
<rect x="27" y="630" width="5" height="5"/>
</g>
<g font-size="10.7" font-weight="bold" fill="#000">
<text x="59.3" y="241" textLength="21" lengthAdjust="spacingAndGlyphs">VDD</text>
<text x="66.6" y="304.8" textLength="11.8" lengthAdjust="spacingAndGlyphs">V1</text>
<text x="65.7" y="344.6">8</text>
<text x="138.7" y="314.9" textLength="11.9" lengthAdjust="spacingAndGlyphs">R1</text>
<text x="135" y="342.8" textLength="16.9" lengthAdjust="spacingAndGlyphs">560</text>
<text x="258" y="316.8">L1</text>
<text x="258" y="336.6">300µ</text>
<text x="258" y="350.2" textLength="91.2" lengthAdjust="spacingAndGlyphs">Rser=2 Cpar=87p</text>
<text x="180.3" y="386.7" textLength="13.5" lengthAdjust="spacingAndGlyphs">V4</text>
<text x="183.8" y="432.5">0</text>
<text x="389.3" y="314.9">R2</text>
<text x="385" y="342.8" textLength="16.9" lengthAdjust="spacingAndGlyphs">560</text>
<text x="422.4" y="386.7" textLength="13.2" lengthAdjust="spacingAndGlyphs">V3</text>
<text x="425.6" y="432.5">0</text>
<text x="519.6" y="394.7" textLength="12.9" lengthAdjust="spacingAndGlyphs">R3</text>
<text x="522.7" y="424.6">2</text>
<text x="590.7" y="309">C1</text>
<text x="590.7" y="332.3">87p</text>
<text x="646.2" y="316.8">L2</text>
<text x="646.2" y="336.8">300µ</text>
<text x="129.9" y="562.8">M1</text>
<text x="129.9" y="583.8" textLength="66" lengthAdjust="spacingAndGlyphs">SPA11N60C3</text>
<text x="59.8" y="572.6">R4</text>
<text x="59.8" y="602.8">10</text>
<text x="380.6" y="562.8">M2</text>
<text x="380.6" y="583.8" textLength="66" lengthAdjust="spacingAndGlyphs">SPA11N60C3</text>
<text x="310.7" y="572.6">R5</text>
<text x="310.7" y="602.8">10</text>
<text x="35.6" y="628.6" textLength="33.8" lengthAdjust="spacingAndGlyphs">PULSE</text>
<text x="40.8" y="659.9">V2</text>
<text x="40.4" y="701" textLength="150" lengthAdjust="spacingAndGlyphs">PULSE(0 6 0 10n 10n 50u 1 1)</text>
<text x="295.5" y="673" textLength="141.8" lengthAdjust="spacingAndGlyphs">.tran 0 150u 0 150n startup</text>
<text transform="translate(123,458.5) rotate(-90)">A</text>
<text transform="translate(374,458.5) rotate(-90)">B</text>
</g>
</svg>
<svg width="1375" height="876" viewBox="0 0 1375 876">
<g shape-rendering="crispEdges" fill="none" stroke-width="1">
<path d="M733,141.5 H1344" stroke="#808080" stroke-dasharray="4 4"/>
<path d="M733,161.5 H1344" stroke="#808080" stroke-dasharray="4 4"/>
<path d="M733,181.5 H1344" stroke="#808080" stroke-dasharray="4 4"/>
<path d="M733,201.5 H1344" stroke="#808080" stroke-dasharray="4 4"/>
<path d="M733,221.5 H1344" stroke="#808080" stroke-dasharray="4 4"/>
<path d="M733,240.5 H1344" stroke="#808080" stroke-dasharray="4 4"/>
<path d="M733,260.5 H1344" stroke="#808080" stroke-dasharray="4 4"/>
<path d="M733,280.5 H1344" stroke="#808080" stroke-dasharray="4 4"/>
<path d="M733,300.5 H1344" stroke="#808080" stroke-dasharray="4 4"/>
<path d="M733,320.5 H1344" stroke="#808080" stroke-dasharray="4 4"/>
<path d="M726,121.5 H733" stroke="#C0C0C0"/>
<path d="M726,141.5 H733" stroke="#C0C0C0"/>
<path d="M726,161.5 H733" stroke="#C0C0C0"/>
<path d="M726,181.5 H733" stroke="#C0C0C0"/>
<path d="M726,201.5 H733" stroke="#C0C0C0"/>
<path d="M726,221.5 H733" stroke="#C0C0C0"/>
<path d="M726,240.5 H733" stroke="#C0C0C0"/>
<path d="M726,260.5 H733" stroke="#C0C0C0"/>
<path d="M726,280.5 H733" stroke="#C0C0C0"/>
<path d="M726,300.5 H733" stroke="#C0C0C0"/>
<path d="M726,320.5 H733" stroke="#C0C0C0"/>
<path d="M726,340.5 H733" stroke="#C0C0C0"/>
<path d="M789.5,121 V340" stroke="#808080" stroke-dasharray="4 4"/>
<path d="M844.5,121 V340" stroke="#808080" stroke-dasharray="4 4"/>
<path d="M900.5,121 V340" stroke="#808080" stroke-dasharray="4 4"/>
<path d="M955.5,121 V340" stroke="#808080" stroke-dasharray="4 4"/>
<path d="M1011.5,121 V340" stroke="#808080" stroke-dasharray="4 4"/>
<path d="M1066.5,121 V340" stroke="#808080" stroke-dasharray="4 4"/>
<path d="M1122.5,121 V340" stroke="#808080" stroke-dasharray="4 4"/>
<path d="M1177.5,121 V340" stroke="#808080" stroke-dasharray="4 4"/>
<path d="M1233.5,121 V340" stroke="#808080" stroke-dasharray="4 4"/>
<path d="M1288.5,121 V340" stroke="#808080" stroke-dasharray="4 4"/>
<rect x="733.5" y="121.5" width="611" height="219" stroke="#C0C0C0"/>
<path d="M733,381.5 H1344" stroke="#808080" stroke-dasharray="4 4"/>
<path d="M733,401.5 H1344" stroke="#808080" stroke-dasharray="4 4"/>
<path d="M733,421.5 H1344" stroke="#808080" stroke-dasharray="4 4"/>
<path d="M733,441.5 H1344" stroke="#808080" stroke-dasharray="4 4"/>
<path d="M733,461.5 H1344" stroke="#808080" stroke-dasharray="4 4"/>
<path d="M733,480.5 H1344" stroke="#808080" stroke-dasharray="4 4"/>
<path d="M733,500.5 H1344" stroke="#808080" stroke-dasharray="4 4"/>
<path d="M733,520.5 H1344" stroke="#808080" stroke-dasharray="4 4"/>
<path d="M733,540.5 H1344" stroke="#808080" stroke-dasharray="4 4"/>
<path d="M733,560.5 H1344" stroke="#808080" stroke-dasharray="4 4"/>
<path d="M726,361.5 H733" stroke="#C0C0C0"/>
<path d="M726,381.5 H733" stroke="#C0C0C0"/>
<path d="M726,401.5 H733" stroke="#C0C0C0"/>
<path d="M726,421.5 H733" stroke="#C0C0C0"/>
<path d="M726,441.5 H733" stroke="#C0C0C0"/>
<path d="M726,461.5 H733" stroke="#C0C0C0"/>
<path d="M726,480.5 H733" stroke="#C0C0C0"/>
<path d="M726,500.5 H733" stroke="#C0C0C0"/>
<path d="M726,520.5 H733" stroke="#C0C0C0"/>
<path d="M726,540.5 H733" stroke="#C0C0C0"/>
<path d="M726,560.5 H733" stroke="#C0C0C0"/>
<path d="M726,580.5 H733" stroke="#C0C0C0"/>
<path d="M789.5,361 V580" stroke="#808080" stroke-dasharray="4 4"/>
<path d="M844.5,361 V580" stroke="#808080" stroke-dasharray="4 4"/>
<path d="M900.5,361 V580" stroke="#808080" stroke-dasharray="4 4"/>
<path d="M955.5,361 V580" stroke="#808080" stroke-dasharray="4 4"/>
<path d="M1011.5,361 V580" stroke="#808080" stroke-dasharray="4 4"/>
<path d="M1066.5,361 V580" stroke="#808080" stroke-dasharray="4 4"/>
<path d="M1122.5,361 V580" stroke="#808080" stroke-dasharray="4 4"/>
<path d="M1177.5,361 V580" stroke="#808080" stroke-dasharray="4 4"/>
<path d="M1233.5,361 V580" stroke="#808080" stroke-dasharray="4 4"/>
<path d="M1288.5,361 V580" stroke="#808080" stroke-dasharray="4 4"/>
<rect x="733.5" y="361.5" width="611" height="219" stroke="#C0C0C0"/>
<path d="M733,621.5 H1344" stroke="#808080" stroke-dasharray="4 4"/>
<path d="M733,642.5 H1344" stroke="#808080" stroke-dasharray="4 4"/>
<path d="M733,662.5 H1344" stroke="#808080" stroke-dasharray="4 4"/>
<path d="M733,682.5 H1344" stroke="#808080" stroke-dasharray="4 4"/>
<path d="M733,702.5 H1344" stroke="#808080" stroke-dasharray="4 4"/>
<path d="M733,723.5 H1344" stroke="#808080" stroke-dasharray="4 4"/>
<path d="M733,743.5 H1344" stroke="#808080" stroke-dasharray="4 4"/>
<path d="M733,763.5 H1344" stroke="#808080" stroke-dasharray="4 4"/>
<path d="M733,783.5 H1344" stroke="#808080" stroke-dasharray="4 4"/>
<path d="M733,804.5 H1344" stroke="#808080" stroke-dasharray="4 4"/>
<path d="M726,601.5 H733" stroke="#C0C0C0"/>
<path d="M726,621.5 H733" stroke="#C0C0C0"/>
<path d="M726,642.5 H733" stroke="#C0C0C0"/>
<path d="M726,662.5 H733" stroke="#C0C0C0"/>
<path d="M726,682.5 H733" stroke="#C0C0C0"/>
<path d="M726,702.5 H733" stroke="#C0C0C0"/>
<path d="M726,723.5 H733" stroke="#C0C0C0"/>
<path d="M726,743.5 H733" stroke="#C0C0C0"/>
<path d="M726,763.5 H733" stroke="#C0C0C0"/>
<path d="M726,783.5 H733" stroke="#C0C0C0"/>
<path d="M726,804.5 H733" stroke="#C0C0C0"/>
<path d="M726,824.5 H733" stroke="#C0C0C0"/>
<path d="M789.5,601 V824" stroke="#808080" stroke-dasharray="4 4"/>
<path d="M844.5,601 V824" stroke="#808080" stroke-dasharray="4 4"/>
<path d="M900.5,601 V824" stroke="#808080" stroke-dasharray="4 4"/>
<path d="M955.5,601 V824" stroke="#808080" stroke-dasharray="4 4"/>
<path d="M1011.5,601 V824" stroke="#808080" stroke-dasharray="4 4"/>
<path d="M1066.5,601 V824" stroke="#808080" stroke-dasharray="4 4"/>
<path d="M1122.5,601 V824" stroke="#808080" stroke-dasharray="4 4"/>
<path d="M1177.5,601 V824" stroke="#808080" stroke-dasharray="4 4"/>
<path d="M1233.5,601 V824" stroke="#808080" stroke-dasharray="4 4"/>
<path d="M1288.5,601 V824" stroke="#808080" stroke-dasharray="4 4"/>
<rect x="733.5" y="601.5" width="611" height="223" stroke="#C0C0C0"/>
<path d="M733.5,824 V832" stroke="#C0C0C0"/>
<path d="M789.5,824 V832" stroke="#C0C0C0"/>
<path d="M844.5,824 V832" stroke="#C0C0C0"/>
<path d="M900.5,824 V832" stroke="#C0C0C0"/>
<path d="M955.5,824 V832" stroke="#C0C0C0"/>
<path d="M1011.5,824 V832" stroke="#C0C0C0"/>
<path d="M1066.5,824 V832" stroke="#C0C0C0"/>
<path d="M1122.5,824 V832" stroke="#C0C0C0"/>
<path d="M1177.5,824 V832" stroke="#C0C0C0"/>
<path d="M1233.5,824 V832" stroke="#C0C0C0"/>
<path d="M1288.5,824 V832" stroke="#C0C0C0"/>
</g>
<g font-size="13.5" fill="#C0C0C0" text-anchor="end">
<text x="725" y="125.7" textLength="27.2" lengthAdjust="spacingAndGlyphs">1.0A</text>
<text x="725" y="145.7" textLength="27.2" lengthAdjust="spacingAndGlyphs">0.9A</text>
<text x="725" y="165.7" textLength="27.2" lengthAdjust="spacingAndGlyphs">0.8A</text>
<text x="725" y="185.7" textLength="27.2" lengthAdjust="spacingAndGlyphs">0.7A</text>
<text x="725" y="205.7" textLength="27.2" lengthAdjust="spacingAndGlyphs">0.6A</text>
<text x="725" y="225.7" textLength="27.2" lengthAdjust="spacingAndGlyphs">0.5A</text>
<text x="725" y="244.7" textLength="27.2" lengthAdjust="spacingAndGlyphs">0.4A</text>
<text x="725" y="264.7" textLength="27.2" lengthAdjust="spacingAndGlyphs">0.3A</text>
<text x="725" y="284.7" textLength="27.2" lengthAdjust="spacingAndGlyphs">0.2A</text>
<text x="725" y="304.7" textLength="27.2" lengthAdjust="spacingAndGlyphs">0.1A</text>
<text x="725" y="324.7" textLength="27.2" lengthAdjust="spacingAndGlyphs">0.0A</text>
<text x="725" y="344.7" textLength="32" lengthAdjust="spacingAndGlyphs">-0.1A</text>
<text x="725" y="365.7" textLength="27.2" lengthAdjust="spacingAndGlyphs">1.0A</text>
<text x="725" y="385.7" textLength="27.2" lengthAdjust="spacingAndGlyphs">0.9A</text>
<text x="725" y="405.7" textLength="27.2" lengthAdjust="spacingAndGlyphs">0.8A</text>
<text x="725" y="425.7" textLength="27.2" lengthAdjust="spacingAndGlyphs">0.7A</text>
<text x="725" y="445.7" textLength="27.2" lengthAdjust="spacingAndGlyphs">0.6A</text>
<text x="725" y="465.7" textLength="27.2" lengthAdjust="spacingAndGlyphs">0.5A</text>
<text x="725" y="484.7" textLength="27.2" lengthAdjust="spacingAndGlyphs">0.4A</text>
<text x="725" y="504.7" textLength="27.2" lengthAdjust="spacingAndGlyphs">0.3A</text>
<text x="725" y="524.7" textLength="27.2" lengthAdjust="spacingAndGlyphs">0.2A</text>
<text x="725" y="544.7" textLength="27.2" lengthAdjust="spacingAndGlyphs">0.1A</text>
<text x="725" y="564.7" textLength="27.2" lengthAdjust="spacingAndGlyphs">0.0A</text>
<text x="725" y="584.7" textLength="32" lengthAdjust="spacingAndGlyphs">-0.1A</text>
<text x="725" y="605.7" textLength="27.2" lengthAdjust="spacingAndGlyphs">1.0A</text>
<text x="725" y="625.7" textLength="27.2" lengthAdjust="spacingAndGlyphs">0.9A</text>
<text x="725" y="646.7" textLength="27.2" lengthAdjust="spacingAndGlyphs">0.8A</text>
<text x="725" y="666.7" textLength="27.2" lengthAdjust="spacingAndGlyphs">0.7A</text>
<text x="725" y="686.7" textLength="27.2" lengthAdjust="spacingAndGlyphs">0.6A</text>
<text x="725" y="706.7" textLength="27.2" lengthAdjust="spacingAndGlyphs">0.5A</text>
<text x="725" y="727.7" textLength="27.2" lengthAdjust="spacingAndGlyphs">0.4A</text>
<text x="725" y="747.7" textLength="27.2" lengthAdjust="spacingAndGlyphs">0.3A</text>
<text x="725" y="767.7" textLength="27.2" lengthAdjust="spacingAndGlyphs">0.2A</text>
<text x="725" y="787.7" textLength="27.2" lengthAdjust="spacingAndGlyphs">0.1A</text>
<text x="725" y="808.7" textLength="27.2" lengthAdjust="spacingAndGlyphs">0.0A</text>
<text x="725" y="828.7" textLength="32" lengthAdjust="spacingAndGlyphs">-0.1A</text>
</g>
<g font-size="13.5" fill="#C0C0C0" text-anchor="middle">
<text x="733.5" y="845" textLength="42" lengthAdjust="spacingAndGlyphs">45.9µs</text>
<text x="789.5" y="845" textLength="42" lengthAdjust="spacingAndGlyphs">46.8µs</text>
<text x="844.5" y="845" textLength="42" lengthAdjust="spacingAndGlyphs">47.7µs</text>
<text x="900.5" y="845" textLength="42" lengthAdjust="spacingAndGlyphs">48.6µs</text>
<text x="955.5" y="845" textLength="42" lengthAdjust="spacingAndGlyphs">49.5µs</text>
<text x="1011.5" y="845" textLength="42" lengthAdjust="spacingAndGlyphs">50.4µs</text>
<text x="1066.5" y="845" textLength="42" lengthAdjust="spacingAndGlyphs">51.3µs</text>
<text x="1122.5" y="845" textLength="42" lengthAdjust="spacingAndGlyphs">52.2µs</text>
<text x="1177.5" y="845" textLength="42" lengthAdjust="spacingAndGlyphs">53.1µs</text>
<text x="1233.5" y="845" textLength="42" lengthAdjust="spacingAndGlyphs">54.0µs</text>
<text x="1288.5" y="845" textLength="42" lengthAdjust="spacingAndGlyphs">54.9µs</text>
</g>
<text x="1038" y="115.8" font-size="13" font-weight="bold" fill="#00FF00" text-anchor="middle" textLength="26.5" lengthAdjust="spacingAndGlyphs">I(V4)</text>
<text x="1038" y="355.8" font-size="13" font-weight="bold" fill="#0000FF" text-anchor="middle" textLength="26.5" lengthAdjust="spacingAndGlyphs">I(V3)</text>
<text x="1038" y="595.8" font-size="13" font-weight="bold" fill="#FF0000" text-anchor="middle" textLength="26.5" lengthAdjust="spacingAndGlyphs">I(L2)</text>
<polyline points="733.0,155.5 988.2,138.2 989.4,141.8 990.6,143.0 990.6,201.7 992.3,214.9 993.7,201.7 995.4,187.3 997.8,178.2 1000.7,174.4 1003.3,177.3 1007.4,186.1 1011.0,195.7 1014.6,208.9 1018.2,222.1 1023.0,237.7 1027.8,252.1 1033.8,266.5 1039.7,277.2 1046.9,288.0 1054.1,295.7 1061.3,301.2 1067.3,304.8 1075.0,308.9 1082.7,312.6 1095.0,316.0 1111.0,318.3 1125.0,319.6 1137.0,320.4 1344.0,320.4" fill="none" stroke="#00FF00" stroke-width="1.2" stroke-linejoin="round"/>
<polyline points="733.0,395.5 988.2,378.2 989.4,381.8 990.6,383.0 990.6,441.7 992.3,454.9 993.7,441.7 995.4,427.3 997.8,418.2 1000.7,414.4 1003.3,417.3 1007.4,426.1 1011.0,435.7 1014.6,448.9 1018.2,462.1 1023.0,477.7 1027.8,492.1 1033.8,506.5 1039.7,517.2 1046.9,528.0 1054.1,535.7 1061.3,541.2 1067.3,544.8 1075.0,548.9 1082.7,552.6 1095.0,556.0 1111.0,558.3 1125.0,559.6 1137.0,560.4 1344.0,560.4" fill="none" stroke="#0000FF" stroke-width="1.2" stroke-linejoin="round"/>
<polyline points="733.0,636.0 991.7,619.8 993.4,622.2 995.9,629.5 999.6,644.3 1003.3,660.2 1006.9,677.4 1011.9,697.0 1016.8,713.0 1021.7,726.5 1027.8,741.2 1034.0,754.7 1040.1,765.8 1048.7,776.8 1056.1,783.4 1065.9,790.3 1075.0,794.5 1087.0,798.0 1100.0,800.4 1110.0,801.8 1119.0,803.2 1140.0,804.5 1344.0,804.5" fill="none" stroke="#FF0000" stroke-width="1.2" stroke-linejoin="round"/>
<path d="M729.5,267.5 V280.5 L732.5,277.5 L735,283 L737,282 L734.5,276.5 H738.5 Z" fill="#fff" stroke="#000" stroke-width="1"/>
</svg>
</body></html>
